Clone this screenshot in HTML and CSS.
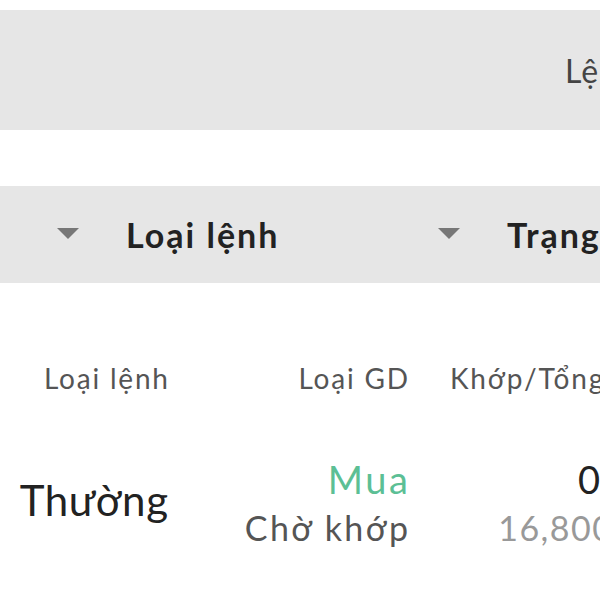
FILE: index.html
```html
<!DOCTYPE html>
<html lang="vi">
<head>
<meta charset="utf-8">
<link rel="stylesheet" href="styles.css">
</head>
<body>
<div class="screen">
  <div class="title-bar"><span class="title">Lệnh trong ngày</span></div>
  <div class="filter-bar">
    <div class="filter"><span class="caret"></span><span class="filter-label">Loại lệnh</span></div>
    <div class="filter"><span class="caret"></span><span class="filter-label">Trạng thái</span></div>
  </div>
  <div class="table">
    <div class="cell head c1">Loại lệnh</div>
    <div class="cell head c2">Loại GD</div>
    <div class="cell head c3">Khớp/Tổng</div>

    <div class="cell c1 type">Thường</div>
    <div class="cell c2 stack">
      <span class="buy">Mua</span>
      <span class="status">Chờ khớp</span>
    </div>
    <div class="cell c3 stack">
      <span class="qty">0</span>
      <span class="total">16,800</span>
    </div>
  </div>
</div>
</body>
</html>
```

FILE: styles.css
```css
html, body {
  margin: 0;
  padding: 0;
  background: #ffffff;
}
body {
  font-family: "Lato", "Noto Sans", sans-serif;
  width: 600px;
  height: 600px;
  overflow: hidden;
}
.screen {
  width: 600px;
  overflow: hidden;
  padding-top: 10px;
}
.title-bar {
  height: 120px;
  background: #e6e6e6;
  display: flex;
  align-items: center;
  padding-left: 565px;
  white-space: nowrap;
  overflow: hidden;
}
.title {
  font-size: 32px;
  color: #444;
  letter-spacing: 1px;
}
.filter-bar {
  margin-top: 56px;
  height: 97px;
  background: #e6e6e6;
  display: flex;
  align-items: center;
  padding-left: 57px;
  white-space: nowrap;
  overflow: hidden;
}
.filter {
  display: flex;
  align-items: center;
  width: 381px;
  flex-shrink: 0;
}
.caret {
  width: 0;
  height: 0;
  border-left: 11px solid transparent;
  border-right: 11px solid transparent;
  border-top: 11px solid #777;
  margin-right: 47px;
  margin-top: -2px;
}
.filter-label {
  font-size: 34px;
  font-weight: 700;
  color: #222;
  letter-spacing: 2px;
}
.table {
  display: grid;
  grid-template-columns: 168px 240px 204px;
  padding-top: 78px;
  white-space: nowrap;
}
.cell {
  text-align: right;
}
.head {
  font-size: 28px;
  color: #555;
  height: 86px;
  letter-spacing: 1.8px;
}
.c1.head,
.c2.head {
  margin-right: -1.8px;
}
.c3.head {
  text-align: left;
  padding-left: 42px;
}
.type {
  font-size: 42px;
  color: #222;
  align-self: center;
  letter-spacing: 0.6px;
  margin-right: -0.6px;
}
.stack {
  display: flex;
  flex-direction: column;
  align-items: flex-end;
  padding-top: 7px;
}
.buy {
  font-size: 38px;
  color: #5cbf95;
  line-height: 50px;
  letter-spacing: 2.6px;
  margin-right: -2.6px;
}
.status {
  font-size: 34px;
  color: #555;
  line-height: 48px;
  letter-spacing: 2.4px;
  margin-right: -2.4px;
}
.qty {
  font-size: 38px;
  color: #222;
  line-height: 50px;
  margin-right: 12px;
}
.total {
  font-size: 34px;
  color: #999;
  line-height: 48px;
  letter-spacing: 1.5px;
  margin-right: -1.5px;
}
```
